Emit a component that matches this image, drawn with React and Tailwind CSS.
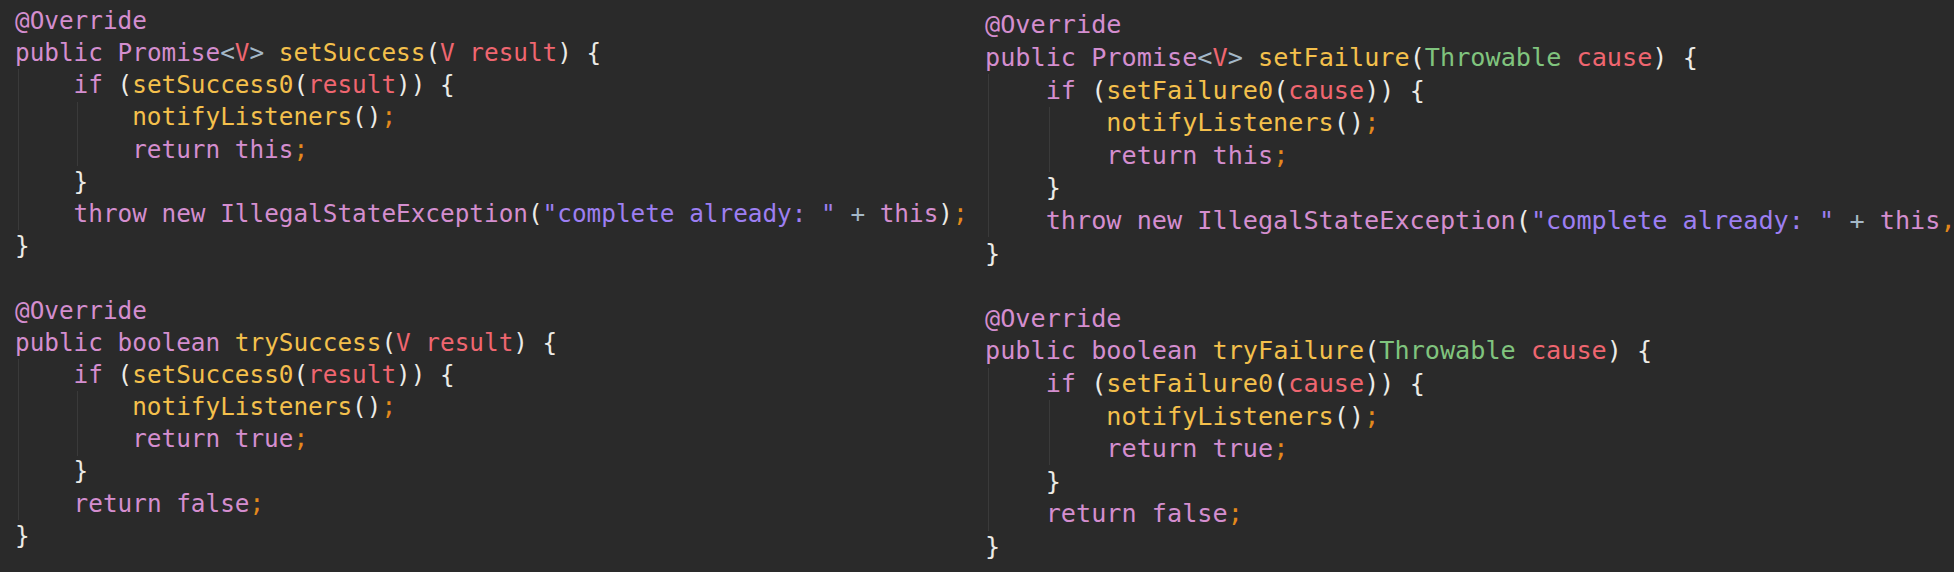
const C = {
  kw: "text-[#d48ecf]",
  fn: "text-[#f4c04c]",
  red: "text-[#ef6670]",
  p: "text-[#ecebe6]",
  semi: "text-[#e3891c]",
  str: "text-[#9d7ff2]",
  op: "text-[#a4b8c8]",
  green: "text-[#80c47e]",
};

function Line({ indent = 0, tokens = [] }) {
  return (
    <div className="flex h-full items-center whitespace-pre">
      {Array.from({ length: indent }).map((_, i) => (
        <div key={i} className="h-full w-[4ch] shrink-0 pl-[3px]">
          <div className="h-full border-l border-[#3a3a3a]" />
        </div>
      ))}
      {tokens.map(([t, c], i) => (
        <span key={i} className={C[c]}>
          {t}
        </span>
      ))}
    </div>
  );
}

function Method({ head, cond, ret1, throwEnd }) {
  return [
    { tokens: [["@Override", "kw"]] },
    { tokens: head },
    {
      indent: 1,
      tokens: [["if ", "kw"], ["(", "p"], ...cond, [")) {", "p"]],
    },
    { indent: 2, tokens: [["notifyListeners", "fn"], ["()", "p"], [";", "semi"]] },
    { indent: 2, tokens: [[ret1, "kw"], [";", "semi"]] },
    { indent: 1, tokens: [["}", "p"]] },
    {
      indent: 1,
      tokens: throwEnd
        ? [
            ["throw new IllegalStateException", "kw"],
            ["(", "p"],
            ['"complete already: "', "str"],
            [" + ", "op"],
            ["this", "kw"],
            ...throwEnd,
          ]
        : [["return false", "kw"], [";", "semi"]],
    },
    { tokens: [["}", "p"]] },
  ];
}

function Panel({ lines, className }) {
  return (
    <div className={className}>
      {lines.map((l, i) => (
        <div key={i} className="h-[var(--lh)]">
          {l && <Line {...l} />}
        </div>
      ))}
    </div>
  );
}

export default function App() {
  const left = [
    ...Method({
      head: [
        ["public Promise", "kw"],
        ["<", "op"],
        ["V", "red"],
        ["> ", "op"],
        ["setSuccess", "fn"],
        ["(", "p"],
        ["V result", "red"],
        [") {", "p"],
      ],
      cond: [["setSuccess0", "fn"], ["(", "p"], ["result", "red"]],
      ret1: "return this",
      throwEnd: [[")", "p"], [";", "semi"]],
    }),
    null,
    ...Method({
      head: [
        ["public boolean ", "kw"],
        ["trySuccess", "fn"],
        ["(", "p"],
        ["V result", "red"],
        [") {", "p"],
      ],
      cond: [["setSuccess0", "fn"], ["(", "p"], ["result", "red"]],
      ret1: "return true",
    }),
  ];

  const right = [
    ...Method({
      head: [
        ["public Promise", "kw"],
        ["<", "op"],
        ["V", "red"],
        ["> ", "op"],
        ["setFailure", "fn"],
        ["(", "p"],
        ["Throwable ", "green"],
        ["cause", "red"],
        [") {", "p"],
      ],
      cond: [["setFailure0", "fn"], ["(", "p"], ["cause", "red"]],
      ret1: "return this",
      throwEnd: [[",", "semi"]],
    }),
    null,
    ...Method({
      head: [
        ["public boolean ", "kw"],
        ["tryFailure", "fn"],
        ["(", "p"],
        ["Throwable ", "green"],
        ["cause", "red"],
        [") {", "p"],
      ],
      cond: [["setFailure0", "fn"], ["(", "p"], ["cause", "red"]],
      ret1: "return true",
    }),
  ];

  return (
    <div className="flex h-[572px] w-[1954px] overflow-hidden bg-[#2a2a2a] font-['DejaVu_Sans_Mono',monospace]">
      <Panel
        lines={left}
        className="w-[970px] shrink-0 overflow-hidden pl-[15px] pt-[5px] text-[24.35px] [--lh:32.2px]"
      />
      <Panel
        lines={right}
        className="flex-1 overflow-hidden pl-[15px] pt-[9px] text-[25.2px] [--lh:32.6px]"
      />
    </div>
  );
}
